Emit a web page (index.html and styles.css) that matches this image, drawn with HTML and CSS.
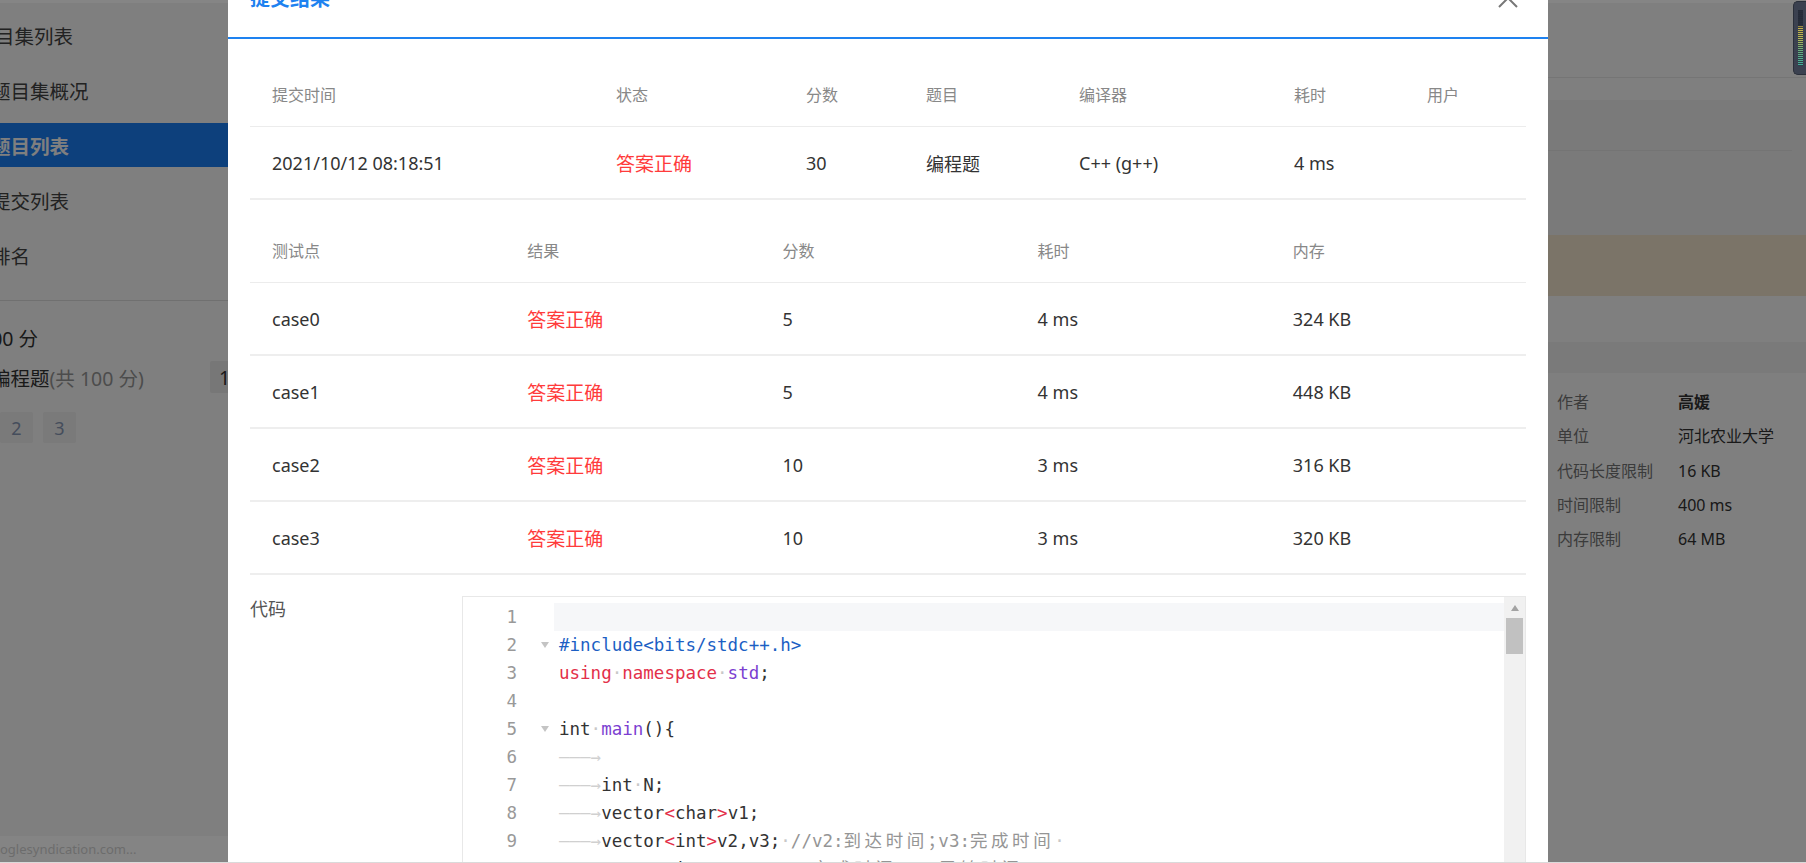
FILE: index.html
```html
<!DOCTYPE html>
<html lang="zh-CN">
<head>
<meta charset="utf-8">
<title>提交结果</title>
<link rel="stylesheet" href="styles.css">
</head>
<body>
<div class="page">
  <aside class="side">
    <div class="side-inner">
      <ul class="nav">
        <li class="nav-item first">目集列表</li>
        <li class="nav-item">题目集概况</li>
        <li class="nav-item active">题目列表</li>
        <li class="nav-item">提交列表</li>
        <li class="nav-item">排名</li>
      </ul>
      <div class="side-divider"></div>
      <div class="total">100 分</div>
      <div class="type-row">
        <span class="type-name">编程题<span class="muted">(共 100 分)</span></span>
        <span class="type-score">100</span>
      </div>
      <div class="pager"><span>1</span><span>2</span><span>3</span></div>
    </div>
  </aside>
  <main class="main">
    <div class="m-top"></div>
    <div class="m-tabs"></div>
    <div class="m-card"><div class="m-card-head"></div></div>
    <div class="m-notice"></div>
    <div class="m-body">
      <section class="info">
        <div class="info-head"></div>
        <dl class="info-list">
          <dt>作者</dt><dd class="strong">高媛</dd>
          <dt>单位</dt><dd>河北农业大学</dd>
          <dt>代码长度限制</dt><dd>16 KB</dd>
          <dt>时间限制</dt><dd>400 ms</dd>
          <dt>内存限制</dt><dd>64 MB</dd>
        </dl>
      </section>
    </div>
  </main>
</div>

<div class="mask"></div>
<div class="topstrip"></div>
<div class="status">oglesyndication.com...</div>

<div class="modal">
  <div class="modal-head">
    <h2 class="modal-title">提交结果</h2>
    <button class="close" aria-label="关闭"><svg viewBox="0 0 20 20" width="20" height="20"><path d="M1 1L19 19M19 1L1 19" stroke="#777" stroke-width="2" fill="none"/></svg></button>
  </div>
  <div class="modal-body">
    <div class="tbl sum">
      <div class="tr th-row"><div>提交时间</div><div>状态</div><div>分数</div><div>题目</div><div>编译器</div><div>耗时</div><div>用户</div></div>
      <div class="tr td-row"><div>2021/10/12 08:18:51</div><div class="ok">答案正确</div><div>30</div><div>编程题</div><div>C++ (g++)</div><div>4 ms</div><div></div></div>
    </div>
    <div class="tbl cases">
      <div class="tr th-row"><div>测试点</div><div>结果</div><div>分数</div><div>耗时</div><div>内存</div></div>
      <div class="tr td-row"><div>case0</div><div class="ok">答案正确</div><div>5</div><div>4 ms</div><div>324 KB</div></div>
      <div class="tr td-row"><div>case1</div><div class="ok">答案正确</div><div>5</div><div>4 ms</div><div>448 KB</div></div>
      <div class="tr td-row"><div>case2</div><div class="ok">答案正确</div><div>10</div><div>3 ms</div><div>316 KB</div></div>
      <div class="tr td-row"><div>case3</div><div class="ok">答案正确</div><div>10</div><div>3 ms</div><div>320 KB</div></div>
    </div>
    <div class="code-row">
      <div class="code-label">代码</div>
      <div class="editor">
        <div class="gutter">
          <div class="gl">1<span class="fold"></span></div>
          <div class="gl">2<span class="fold"><i class="tri"></i></span></div>
          <div class="gl">3<span class="fold"></span></div>
          <div class="gl">4<span class="fold"></span></div>
          <div class="gl">5<span class="fold"><i class="tri"></i></span></div>
          <div class="gl">6<span class="fold"></span></div>
          <div class="gl">7<span class="fold"></span></div>
          <div class="gl">8<span class="fold"></span></div>
          <div class="gl">9<span class="fold"></span></div>
          <div class="gl">10<span class="fold"></span></div>
        </div>
        <div class="code">
          <div class="ln active"></div>
          <div class="ln"><span class="c-pre">#include&lt;bits/stdc++.h&gt;</span></div>
          <div class="ln"><span class="c-kw">using</span><span class="c-inv">·</span><span class="c-kw">namespace</span><span class="c-inv">·</span><span class="c-fn">std</span>;</div>
          <div class="ln"></div>
          <div class="ln">int<span class="c-inv">·</span><span class="c-fn">main</span>(){</div>
          <div class="ln"><span class="c-tab">———→</span></div>
          <div class="ln"><span class="c-tab">———→</span>int<span class="c-inv">·</span>N;</div>
          <div class="ln"><span class="c-tab">———→</span>vector<span class="c-kw">&lt;</span>char<span class="c-kw">&gt;</span>v1;</div>
          <div class="ln"><span class="c-tab">———→</span>vector<span class="c-kw">&lt;</span>int<span class="c-kw">&gt;</span>v2,v3;<span class="c-inv">·</span><span class="c-cm">//v2:<span class="cjk">到达时间</span><span class="half">；</span>v3:<span class="cjk">完成时间</span></span><span class="c-inv">·</span></div>
          <div class="ln"><span class="c-tab">———→</span>vector<span class="c-kw">&lt;</span>int<span class="c-kw">&gt;</span>v4;<span class="c-inv">·</span><span class="c-cm">//v4:<span class="cjk">完成时间</span>-v2=<span class="cjk">周转时间</span></span><span class="c-inv">·</span></div>
        </div>
        <div class="vscroll"><i class="up"></i><i class="thumb"></i></div>
      </div>
    </div>
  </div>
</div>

<div class="meter"><i class="meter-bars"></i></div>
<div class="hline"></div>
</body>
</html>
```

FILE: styles.css
```css
* { box-sizing: border-box; }
html, body { margin: 0; padding: 0; }
body {
  width: 1806px;
  height: 863px;
  overflow: hidden;
  position: relative;
  background: #fff;
  color: #333;
  font-family: "Noto Sans", "Noto Sans CJK SC", sans-serif;
}

/* ---------- background page ---------- */
.page { display: flex; height: 863px; }

.side { width: 228px; flex: none; overflow: hidden; background: #fff; }
.side-inner { margin-left: -9px; width: 237px; padding-top: 13px; }
.nav { list-style: none; margin: 0; padding: 0; }
.nav-item {
  height: 44px;
  margin-bottom: 11px;
  display: flex;
  align-items: center;
  font-size: 19.5px;
  color: #444;
  white-space: nowrap;
}
.nav-item:last-child { margin-bottom: 0; }
.nav-item.first { padding-left: 4px; }
.nav-item.active { background: #1a80f8; color: #fff; font-weight: 700; }
.side-divider { height: 1px; background: #e0e0e0; margin-top: 23px; }
.total { margin: 23px 0 0 -11px; font-size: 19.5px; line-height: 30px; color: #333; }
.type-row { display: flex; align-items: center; height: 32px; margin-top: 7px; font-size: 19.5px; }
.type-name { width: 219px; flex: none; white-space: nowrap; color: #333; }
.type-name .muted { color: #999; }
.type-score {
  height: 32px;
  padding: 0 9px;
  display: flex;
  align-items: center;
  background: #eee;
  color: #333;
  border-radius: 2px;
}
.pager { display: flex; gap: 10px; margin: 19px 0 0 -34px; }
.pager span {
  width: 33px;
  height: 31px;
  display: flex;
  align-items: center;
  justify-content: center;
  background: #f4f4f4;
  color: #8a9ab8;
  font-size: 18px;
  border-radius: 2px;
}

.main { flex: 1; display: flex; flex-direction: column; }
.m-top { height: 78px; flex: none; border-bottom: 1px solid #ebebeb; }
.m-tabs { height: 22px; flex: none; }
.m-card { height: 135px; flex: none; background: #f5f5f5; }
.m-card-head { height: 51px; margin-right: 14px; border-bottom: 1px solid #e8e8e8; }
.m-notice { height: 61px; flex: none; background: #f6e8d0; }
.m-body { flex: 1; display: flex; justify-content: flex-end; }
.info { width: 258px; }
.info-head { height: 31px; margin-top: 46px; background: #f5f5f5; }
.info-list {
  margin: 12px 0 0;
  padding-left: 9px;
  display: grid;
  grid-template-columns: 121px 1fr;
  font-size: 16px;
  line-height: 34.3px;
}
.info-list dt { color: #777; }
.info-list dd { margin: 0; color: #333; white-space: nowrap; }
.info-list dd.strong { font-weight: 700; }

/* ---------- overlay layer ---------- */
.mask { position: absolute; inset: 0; background: rgba(0, 0, 0, .5); }
.topstrip { position: absolute; top: 0; left: 0; right: 0; height: 3px; background: rgba(255, 255, 255, .05); }
.status {
  position: absolute;
  left: 0;
  bottom: 1px;
  width: 228px;
  height: 26px;
  background: #848484;
  color: #6c6c6c;
  font-size: 13px;
  line-height: 26px;
  white-space: nowrap;
  overflow: hidden;
}
.hline { position: absolute; left: 0; right: 0; bottom: 0; height: 1px; background: #dadada; }

.meter {
  position: absolute;
  right: 0;
  top: 1px;
  width: 13px;
  height: 74px;
  background: #3b4150;
  border: 1px solid #2a2f3a;
  border-right: 0;
  border-radius: 5px 0 0 5px;
  padding: 8px 0 0 4px;
}
.meter-bars {
  display: block;
  width: 5px;
  height: 56px;
  background:
    repeating-linear-gradient(to bottom, transparent 0 1px, rgba(40, 45, 60, .85) 1px 2px),
    linear-gradient(to bottom, #252b38 0, #252b38 28%, #c6b04a 30%, #b4b858 52%, #6eae7c 70%, #3fae9c 100%);
}

/* ---------- modal ---------- */
.modal {
  position: absolute;
  left: 228px;
  top: -30px;
  width: 1320px;
  height: 960px;
  background: #fff;
}
.modal-head {
  height: 69px;
  border-bottom: 2px solid #1e82f0;
  display: flex;
  justify-content: space-between;
  align-items: flex-start;
  padding: 0 30px 0 22px;
}
.modal-title {
  margin: 0;
  padding-top: 15px;
  font-size: 20px;
  line-height: 28px;
  font-weight: 700;
  color: #1e82f0;
}
.close { margin-top: 18px; width: 20px; height: 20px; padding: 0; border: 0; background: none; }
.close svg { display: block; }
.modal-body { padding: 22px 22px 0; }

.tr { display: grid; align-items: center; }
.tr > div { padding-left: 22px; white-space: nowrap; }
.sum .tr { grid-template-columns: 344px 190px 120px 153px 215px 133px 1fr; }
.cases { margin-top: 17px; }
.cases .tr { grid-template-columns: repeat(5, 1fr); }
.th-row { height: 66px; border-bottom: 1px solid #ececec; font-size: 16px; color: #888; }
.td-row { height: 73px; border-bottom: 2px solid #eeeeee; font-size: 18px; color: #333; }
.td-row .ok { color: #ff3b3b; font-size: 19px; }

.code-row { display: flex; margin-top: 21px; }
.code-label { width: 212px; flex: none; font-size: 18px; line-height: 26px; color: #555; }
.editor { flex: 1; height: 420px; border: 1px solid #e8e8e8; display: flex; }
.gutter { width: 91px; flex: none; padding-top: 6px; }
.gl {
  height: 28px;
  display: flex;
  justify-content: flex-end;
  align-items: center;
  color: #999;
  font: 17.5px/28px "DejaVu Sans Mono", monospace;
}
.fold { width: 37px; flex: none; display: flex; align-items: center; padding-left: 24px; }
.tri {
  display: block;
  width: 0;
  height: 0;
  border-left: 4px solid transparent;
  border-right: 4px solid transparent;
  border-top: 6px solid #c4c4c4;
}
.code {
  flex: 1;
  min-width: 0;
  padding-top: 6px;
  font: 17.5px/28px "DejaVu Sans Mono", "Noto Sans CJK SC", monospace;
  color: #333;
}
.ln { height: 28px; padding-left: 5px; white-space: pre; }
.ln.active { background: #f6f7f9; }
.c-pre { color: #1c5fc4; }
.c-kw { color: #e3304a; }
.c-fn { color: #7c3fd1; }
.c-cm { color: #959595; }
.c-inv { color: #c8c8c8; }
.c-tab { color: #d0d0d0; }
.cjk { letter-spacing: calc(2ch - 1em); }
.half { display: inline-block; width: 1ch; }

.vscroll {
  width: 21px;
  flex: none;
  background: #f1f1f1;
  display: flex;
  flex-direction: column;
  align-items: center;
}
.vscroll .up {
  display: block;
  margin-top: 8px;
  width: 0;
  height: 0;
  border-left: 4px solid transparent;
  border-right: 4px solid transparent;
  border-bottom: 6px solid #a3a3a3;
}
.vscroll .thumb { display: block; margin-top: 7px; width: 17px; height: 36px; background: #c1c1c1; }
```
